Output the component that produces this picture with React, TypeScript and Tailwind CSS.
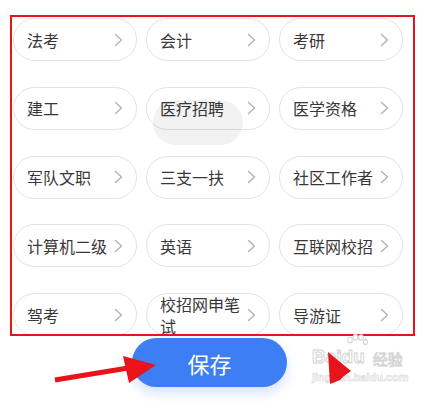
import React from "react";

const items = [
  "法考", "会计", "考研",
  "建工", "医疗招聘", "医学资格",
  "军队文职", "三支一扶", "社区工作者",
  "计算机二级", "英语", "互联网校招",
  "驾考", "校招网申笔试", "导游证",
];

function Chevron() {
  return (
    <svg width="9" height="14" viewBox="0 0 9 14" className="shrink-0 ml-[3px]">
      <polyline points="1.5,1.5 7.5,7 1.5,12.5" fill="none" stroke="#b4b4b4" strokeWidth="1.5" strokeLinecap="round" strokeLinejoin="round" />
    </svg>
  );
}

function Pill({ label }: { label: string }) {
  return (
    <div className="h-[43px] rounded-full border border-[#e2e2e2] bg-white flex items-center pl-[13px] pr-[13px]">
      <span className="flex-1 min-w-0 text-[16px] leading-[22px] text-[#383838] break-all">{label}</span>
      <Chevron />
    </div>
  );
}

function Watermark() {
  return (
    <div className="absolute left-[312px] top-[347px] flex flex-col pointer-events-none">
      <div className="flex items-end gap-[8px]">
        <div className="relative">
          <svg width="22" height="16" viewBox="0 0 22 16" className="absolute left-[34px] -top-[13px]">
            <g fill="white" stroke="#d6d6d6" strokeWidth="1.1">
              <ellipse cx="4" cy="6" rx="2.3" ry="2.8" />
              <ellipse cx="9.5" cy="3.2" rx="2.3" ry="2.8" />
              <ellipse cx="15" cy="3.5" rx="2.3" ry="2.8" />
              <ellipse cx="19.5" cy="8" rx="2" ry="2.6" />
            </g>
          </svg>
          <span className="block text-[19px] font-bold leading-none text-white font-['Liberation_Sans',sans-serif] [-webkit-text-stroke:1px_#d4d4d4]">
            Baidu
          </span>
        </div>
        <span className="text-[15px] leading-none text-white [-webkit-text-stroke:0.9px_#d4d4d4]">经验</span>
      </div>
      <span className="mt-[6px] whitespace-nowrap text-[11px] leading-none text-white font-bold font-['Liberation_Sans',sans-serif] [-webkit-text-stroke:0.6px_#d8d8d8]">
        jingyan.baidu.com
      </span>
    </div>
  );
}

export default function App() {
  return (
    <div className="relative w-[430px] h-[404px] bg-white overflow-hidden font-['Noto_Sans_CJK_SC',sans-serif]">
      <div className="h-[336px] overflow-hidden pt-[18px] pl-[13px]">
        <div className="grid grid-cols-[124px_124px_124px] gap-x-[9px] gap-y-[25.75px]">
          {items.map((t) => (
            <Pill key={t} label={t} />
          ))}
        </div>
      </div>
      <div className="pl-[132px] pt-[2px]">
        <button className="w-[155px] h-[49px] rounded-full bg-[#3d7ef4] text-white text-[22px] leading-none shadow-[0_6px_12px_rgba(61,126,244,0.22)]">
          保存
        </button>
      </div>

      {/* pressed ripple */}
      <div className="absolute left-[153px] top-[100px] w-[90px] h-[45px] rounded-full bg-black/[0.05] pointer-events-none" />

      {/* red annotation box */}
      <div className="absolute left-[10px] top-[15px] w-[405px] h-[321px] border-2 border-[#e8131b] pointer-events-none" />

      <Watermark />

      {/* red arrows */}
      <svg className="absolute left-0 top-0 pointer-events-none" width="430" height="404" viewBox="0 0 430 404">
        <line x1="55" y1="380" x2="128" y2="368" stroke="#e8131b" strokeWidth="5" />
        <polygon points="123,356 156,365 129,383" fill="#e8131b" />
        <polygon points="328,352 351,371 344,376 340,380 330,384" fill="#e8131b" />
      </svg>
    </div>
  );
}
